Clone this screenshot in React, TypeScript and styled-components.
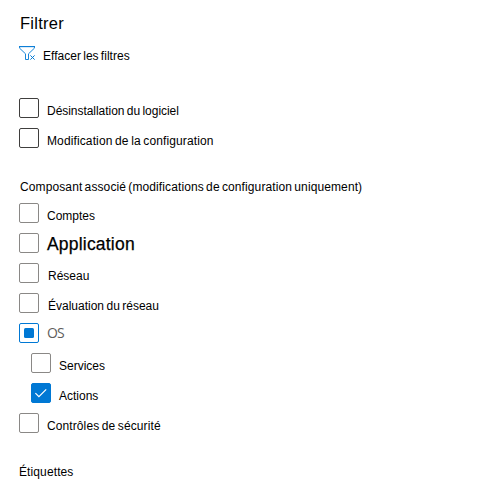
import React from "react";
import styled, { createGlobalStyle } from "styled-components";

const GlobalStyle = createGlobalStyle`
  body {
    margin: 0;
    background: #fff;
    color: #000;
    font: 12px/14px "Liberation Sans", Arial, sans-serif;
  }
`;

const Panel = styled.main`
  display: flex;
  flex-direction: column;
  padding: 13px 0 0 19px;
`;

const Title = styled.h1`
  margin: 0 0 0 1px;
  font-size: 16.5px;
  font-weight: 400;
  line-height: 20px;
  letter-spacing: 0.25px;
`;

const ClearButton = styled.button`
  display: flex;
  align-items: flex-start;
  align-self: flex-start;
  height: 20px;
  margin-top: 13px;
  padding: 0;
  border: 0;
  background: none;
  color: inherit;
  font: inherit;
  svg {
    flex: none;
    margin-right: 7px;
  }
`;

const ClearText = styled.span`
  padding-top: 3px;
  letter-spacing: 0.02px;
  word-spacing: -1.1px;
  white-space: nowrap;
`;

const Group = styled.section<{ $top: number }>`
  display: flex;
  flex-direction: column;
  margin-top: ${(p) => p.$top}px;
`;

const Heading = styled.h2<{ $indent?: number }>`
  margin: 0 0 0 ${(p) => p.$indent ?? 0}px;
  font-size: 12px;
  font-weight: 400;
  line-height: 14px;
  letter-spacing: 0.11px;
  word-spacing: -1.2px;
  white-space: nowrap;
`;

const Row = styled.label<{ $nested?: boolean }>`
  display: flex;
  align-items: flex-start;
  height: 30px;
  padding-left: ${(p) => (p.$nested ? 12 : 0)}px;
`;

type State = "off" | "mixed" | "on";

const Box = styled.span<{ $state: State; $dark?: boolean }>`
  display: flex;
  flex: none;
  align-items: center;
  justify-content: center;
  box-sizing: border-box;
  width: 20px;
  height: 20px;
  border: 1px solid
    ${(p) => (p.$state !== "off" ? "#0078d4" : p.$dark ? "#3f3e3d" : "#8a8886")};
  border-radius: 2px;
  background: ${(p) => (p.$state === "on" ? "#0078d4" : "#fff")};
`;

const Mixed = styled.span`
  width: 10px;
  height: 10px;
  border-radius: 1.5px;
  background: #0078d4;
`;

type Tone = "normal" | "large" | "muted";

const Label = styled.span<{ $tone: Tone; $gap: number; $spacing: number }>`
  padding-top: ${(p) => (p.$tone === "normal" ? 6 : p.$tone === "large" ? 1 : 0)}px;
  margin-left: ${(p) => p.$gap}px;
  color: ${(p) => (p.$tone === "muted" ? "#605e5c" : "#000")};
  font-family: ${(p) =>
    p.$tone === "muted" ? '"Open Sans", sans-serif' : '"Liberation Sans", Arial, sans-serif'};
  font-weight: 400;
  font-size: ${(p) => (p.$tone === "large" ? 17.5 : p.$tone === "muted" ? 14 : 12)}px;
  line-height: ${(p) => (p.$tone === "normal" ? 14 : 20)}px;
  letter-spacing: ${(p) => p.$spacing}px;
  word-spacing: -0.9px;
  -webkit-text-stroke: ${(p) => (p.$tone === "large" ? 0.25 : 0)}px;
  white-space: nowrap;
`;

const ClearFilterIcon = () => (
  <svg width="17" height="16" viewBox="0 0 17 16" fill="none" stroke="#0078d4">
    <path d="M.6 1v1.2L6.5 7.8v5.7h3V7.8l5.9-5.6V1" strokeWidth=".9" />
    <path d="M0 .6h16" strokeWidth="1.1" />
    <path d="M11.4 9.4l4.2 4.2M15.6 9.4l-4.2 4.2" strokeWidth="1" />
  </svg>
);

const CheckIcon = () => (
  <svg width="14" height="14" viewBox="0 0 14 14" fill="none" stroke="#fff">
    <path d="M1.4 7.2l3.5 3.5 7.3-7.4" strokeWidth="1.2" />
  </svg>
);

interface OptionProps {
  text: string;
  state?: State;
  dark?: boolean;
  nested?: boolean;
  tone?: Tone;
  gap?: number;
  spacing?: number;
}

const Option = ({
  text,
  state = "off",
  dark,
  nested,
  tone = "normal",
  gap = 8,
  spacing = 0,
}: OptionProps) => (
  <Row $nested={nested}>
    <Box $state={state} $dark={dark}>
      {state === "mixed" && <Mixed />}
      {state === "on" && <CheckIcon />}
    </Box>
    <Label $tone={tone} $gap={gap} $spacing={spacing}>
      {text}
    </Label>
  </Row>
);

const changeTypes: OptionProps[] = [
  { text: "Désinstallation du logiciel", dark: true, spacing: -0.04 },
  { text: "Modification de la configuration", dark: true, spacing: 0.12 },
];

const components: OptionProps[] = [
  { text: "Comptes" },
  { text: "Application", tone: "large", spacing: 0.2 },
  { text: "Réseau", gap: 9 },
  { text: "Évaluation du réseau", gap: 9, spacing: 0 },
  { text: "OS", state: "mixed", tone: "muted", spacing: -0.8 },
  { text: "Services", nested: true },
  { text: "Actions", state: "on", nested: true },
  { text: "Contrôles de sécurité", spacing: 0.1 },
];

export default function App() {
  return (
    <>
      <GlobalStyle />
      <Panel>
        <Title>Filtrer</Title>
        <ClearButton>
          <ClearFilterIcon />
          <ClearText>Effacer les filtres</ClearText>
        </ClearButton>
        <Group $top={32}>
          {changeTypes.map((o) => (
            <Option key={o.text} {...o} />
          ))}
        </Group>
        <Group $top={22}>
          <Heading $indent={1}>
            Composant associé (modifications de configuration uniquement)
          </Heading>
        </Group>
        <Group $top={9}>
          {components.map((o) => (
            <Option key={o.text} {...o} />
          ))}
        </Group>
        <Group $top={22}>
          <Heading>Étiquettes</Heading>
        </Group>
      </Panel>
    </>
  );
}
